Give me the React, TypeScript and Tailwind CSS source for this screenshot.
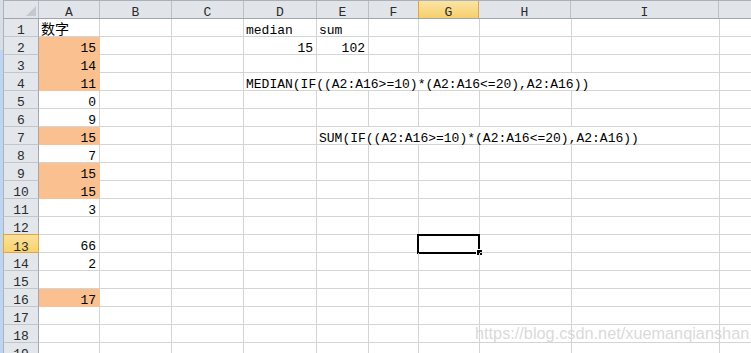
type Cell = { t?: string; right?: boolean; fill?: boolean; w?: string; span?: number; cjk?: boolean };

const cols = [
  { key: 'A', w: 'w-[61px]' },
  { key: 'B', w: 'w-[72px]' },
  { key: 'C', w: 'w-[72px]' },
  { key: 'D', w: 'w-[73px]' },
  { key: 'E', w: 'w-[52px]' },
  { key: 'F', w: 'w-[50px]' },
  { key: 'G', w: 'w-[61px]' },
  { key: 'H', w: 'w-[92px]' },
  { key: 'I', w: 'w-[148px]' },
  { key: 'J', w: 'flex-1' },
];

const n = (t: string, fill = false): Cell => ({ t, right: true, fill });

const rows: Record<string, Cell>[] = [
  { A: { t: '数字', cjk: true }, D: { t: 'median' }, E: { t: 'sum' } },
  { A: n('15', true), D: n('15'), E: n('102') },
  { A: n('14', true) },
  { A: n('11', true), D: { t: 'MEDIAN(IF((A2:A16>=10)*(A2:A16<=20),A2:A16))', w: 'w-[476px]', span: 6 } },
  { A: n('0') },
  { A: n('9') },
  { A: n('15', true), E: { t: 'SUM(IF((A2:A16>=10)*(A2:A16<=20),A2:A16))', w: 'w-[403px]', span: 5 } },
  { A: n('7') },
  { A: n('15', true) },
  { A: n('15', true) },
  { A: n('3') },
  {},
  { A: n('66') },
  { A: n('2') },
  {},
  { A: n('17', true) },
  {},
  {},
  {},
];

const SELECTED_ROW = 13;
const SELECTED_COL = 'G';

function ColHeader() {
  return (
    <div className="flex h-[19px] shrink-0 border-t border-b border-t-[#a9b0b8] border-b-[#9ea6af] bg-[#e1e5ea]">
      <div className="relative w-[36px] shrink-0 border-l border-r border-l-[#aab2bb] border-r-[#b9c0c8]">
        <svg className="absolute bottom-[2px] right-[2px]" width="10" height="10" viewBox="0 0 10 10">
          <polygon points="10,0 10,10 0,10" fill="#c3c9d0" />
        </svg>
      </div>
      {cols.map((c) => {
        const sel = c.key === SELECTED_COL;
        // the last column is cut off by the window, its letter is out of view
        const label = c.key === 'J' ? '' : c.key;
        return (
          <div
            key={c.key}
            className={`${c.w} shrink-0 text-center leading-[23px] text-[13px] text-[#2b2b2b] ${
              sel
                ? 'relative -ml-px border-l border-r border-[#e3a445] bg-linear-to-b from-[#fbe4a4] to-[#f6cf6a]'
                : 'border-r border-[#b9c0c8]'
            } ${c.key === 'J' ? 'border-r-0' : ''}`}
          >
            {label}
          </div>
        );
      })}
    </div>
  );
}

function Row({ idx, data }: { idx: number; data: Record<string, Cell> }) {
  const num = idx + 1;
  const selRow = num === SELECTED_ROW;
  const out = [];
  for (let i = 0; i < cols.length; i++) {
    const c = cols[i];
    const cell = data[c.key];
    const w = cell?.w ?? c.w;
    const last = c.key === 'J' || (cell?.span && i + cell.span >= cols.length);
    out.push(
      <div
        key={c.key}
        className={`relative ${w} h-[18px] shrink-0 whitespace-nowrap border-b leading-[23px] text-[13px] text-black ${
          last ? '' : 'border-r'
        } ${cell?.fill ? 'bg-[#fac090] border-[#fac090]' : 'border-[#d4d4d4]'} ${
          cell?.right ? 'pr-[3px] text-right' : 'pl-[2px]'
        }`}
      >
        {cell?.t && <span className={cell.cjk ? 'text-[14px]' : ''}>{cell.t}</span>}
        {selRow && c.key === SELECTED_COL && (
          <>
            <div className="absolute -left-[2px] -top-[1px] h-[20px] w-[63px] border-2 border-black" />
            <div className="absolute left-[57px] top-[14px] h-[7px] w-[7px] border border-white bg-black" />
          </>
        )}
      </div>
    );
    if (cell?.span) i += cell.span - 1;
  }
  return (
    <div className="flex h-[18px] shrink-0">
      <div
        className={`w-[36px] h-[18px] shrink-0 border-l border-r border-b text-center leading-[23px] text-[13px] text-[#2b2b2b] ${
          selRow
            ? '-mt-px h-[19px] border-[#e3a445] border-t bg-linear-to-b from-[#fbe09a] to-[#f8d36a] leading-[25px]'
            : 'border-l-[#aab2bb] border-r-[#9ea7b1] border-b-[#c0c6cd] bg-[#e3e6eb]'
        }`}
      >
        {num}
      </div>
      {out}
    </div>
  );
}

export default function App() {
  return (
    <div className="relative flex h-[353px] w-[751px] overflow-hidden bg-white font-['Liberation_Mono','Noto_Sans_CJK_SC',monospace]">
      <div className="flex w-[3px] shrink-0 flex-col">
        <div className="h-[50px] bg-[#d9dee4]" />
        <div className="flex-1 bg-[#bcd5f1]" />
      </div>
      <div className="flex min-w-0 flex-1 flex-col">
        <ColHeader />
        {rows.map((r, i) => (
          <Row key={i} idx={i} data={r} />
        ))}
      </div>
      <div className="pointer-events-none absolute left-[475px] top-[325px] whitespace-nowrap font-['Liberation_Sans',sans-serif] text-[16.3px] leading-none text-[#cfcfcf]/80">
        https://blog.csdn.net/xuemanqianshan
      </div>
    </div>
  );
}
